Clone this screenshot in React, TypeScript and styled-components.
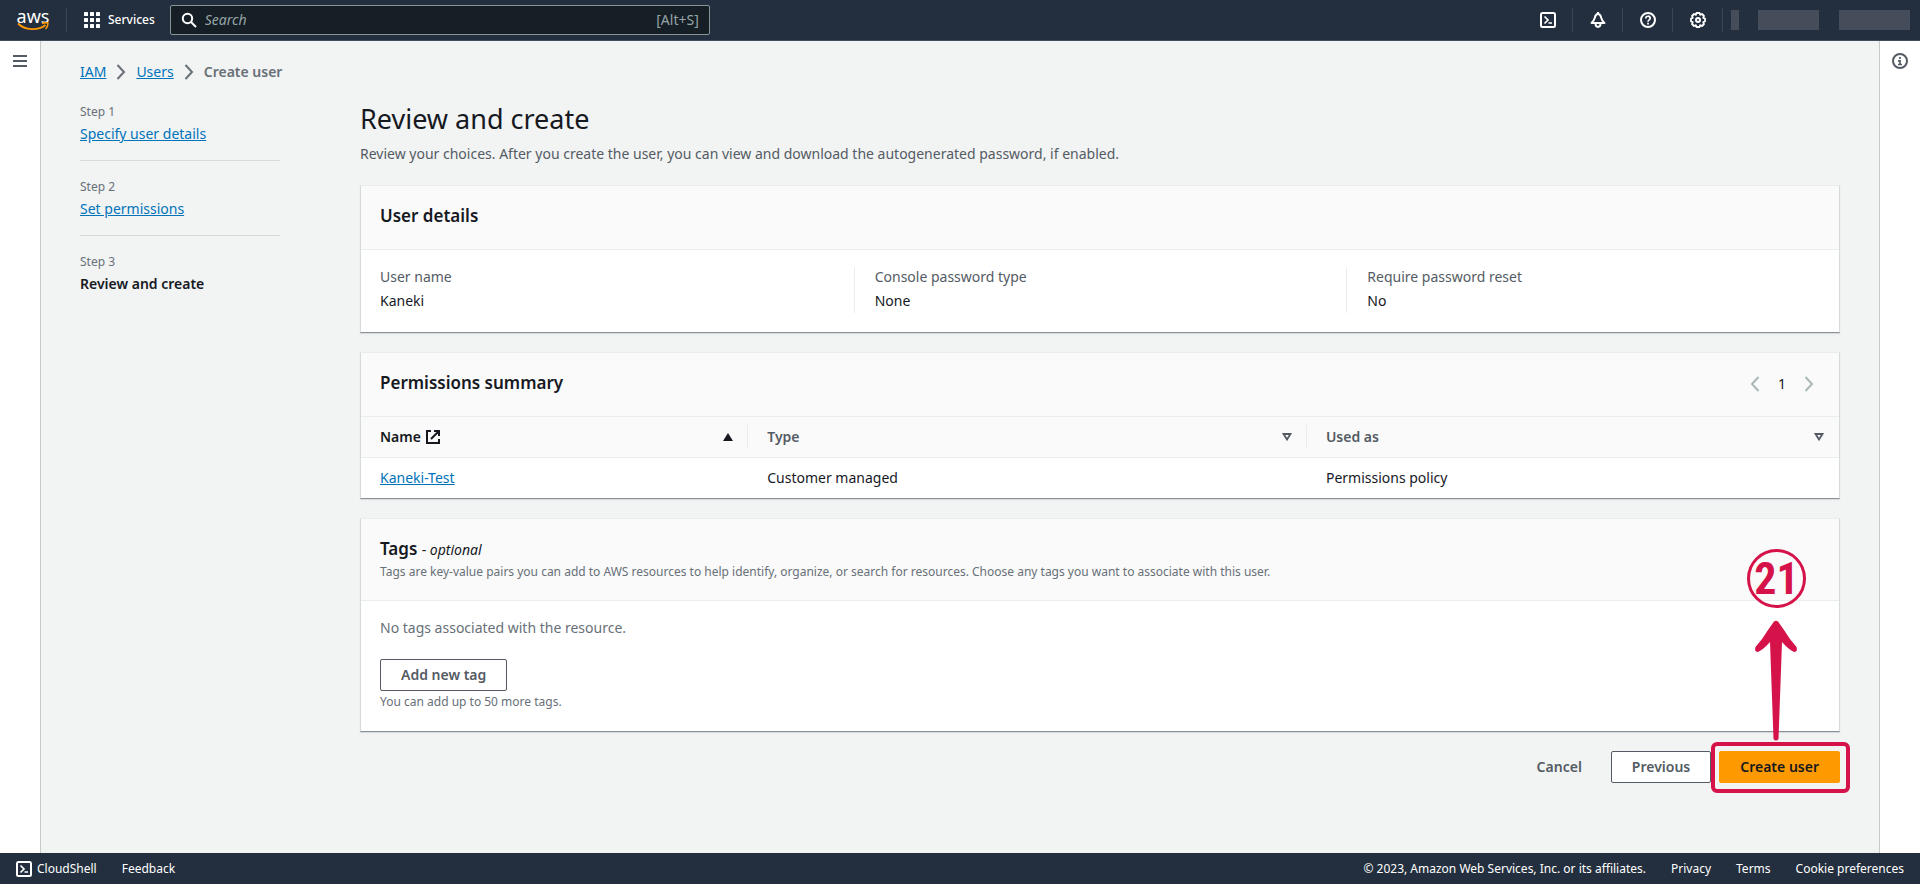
import React from "react";
import styled, { createGlobalStyle, css } from "styled-components";

const GlobalStyle = createGlobalStyle`
  *, *::before, *::after { box-sizing: border-box; }
  body {
    margin: 0;
    background: #f2f3f3;
    color: #16191f;
    font: 14px/22px "Noto Sans", "Open Sans", sans-serif;
  }
  h1, h2, p, ol, dl, dd { margin: 0; padding: 0; }
  ol { list-style: none; }
  button, input { font: inherit; }
  svg { display: block; flex: none; }
`;

const Page = styled.div`
  display: flex;
  flex-direction: column;
  min-height: 100vh;
`;

/* ---------- top bar ---------- */

const TopBar = styled.header`
  display: flex;
  align-items: center;
  height: 41px;
  flex: none;
  background: #232f3e;
  border-bottom: 1px solid #414d5c;
  color: #fff;
`;

const LogoLink = styled.a`
  display: flex;
  flex-direction: column;
  align-items: center;
  width: 66px;
  color: #fff;
  text-decoration: none;
  font-size: 18px;
  line-height: 12px;
`;

const BarRule = styled.span`
  width: 1px;
  height: 24px;
  background: #36455a;
`;

const ServicesButton = styled.button`
  display: flex;
  align-items: center;
  gap: 8px;
  padding: 0 15px 0 17px;
  border: 0;
  background: none;
  color: #fff;
  font-size: 12px;
  font-weight: 500;
`;

const SearchBox = styled.label`
  display: flex;
  align-items: center;
  gap: 8px;
  width: 540px;
  height: 30px;
  padding: 0 10px;
  border: 1px solid #879596;
  border-radius: 2px;
  background: #161e26;
  color: #95a5a6;
`;

const SearchInput = styled.input`
  flex: 1;
  min-width: 0;
  padding: 0;
  border: 0;
  outline: 0;
  background: none;
  color: #fff;
  &::placeholder { color: #95a5a6; font-style: italic; opacity: 1; }
`;

const BarTools = styled.div`
  display: flex;
  align-items: center;
  margin-left: auto;
  padding-right: 10px;
`;

const IconButton = styled.button<{ $width?: number }>`
  display: flex;
  align-items: center;
  justify-content: center;
  width: ${(p) => p.$width ?? 49}px;
  height: 24px;
  padding: 0;
  border: 0;
  background: none;
  color: inherit;
`;

const Redacted = styled.span<{ $width: number; $gap: number }>`
  width: ${(p) => p.$width}px;
  height: 20px;
  margin-left: ${(p) => p.$gap}px;
  background: #454d5b;
`;

/* ---------- frame ---------- */

const Body = styled.div`
  display: flex;
  flex: 1;
`;

const Rail = styled.aside<{ $side: "left" | "right" }>`
  flex: none;
  width: 41px;
  padding: 8px 0;
  background: #fff;
  color: #545b64;
  ${(p) => (p.$side === "left" ? css`border-right: 1px solid #c4cbcb;` : css`border-left: 1px solid #c4cbcb;`)}
`;

const Main = styled.main`
  flex: 1;
  min-width: 0;
  padding: 20px 39px 40px;
`;

const Link = styled.a`
  color: #0073bb;
  text-decoration: underline;
`;

const Breadcrumbs = styled.nav`
  display: flex;
  align-items: center;
  gap: 10px;
  color: #687078;
`;

const Current = styled.span`
  font-weight: 600;
`;

const Wizard = styled.div`
  display: flex;
  gap: 80px;
  margin-top: 17px;
`;

const Steps = styled.ol`
  flex: none;
  width: 200px;
`;

const Step = styled.li`
  padding-bottom: 15px;
  & + & { border-top: 1px solid #d5dbdb; padding-top: 14px; }
`;

const StepLabel = styled.div`
  color: #687078;
  font-size: 12px;
  line-height: 23px;
`;

const StepName = styled.div`
  font-weight: 600;
`;

const Content = styled.div`
  flex: 1;
  min-width: 0;
`;

const PageTitle = styled.h1`
  padding-top: 1px;
  font-size: 27px;
  font-weight: 400;
  line-height: 36px;
`;

const Intro = styled.p`
  margin: 6px 0 20px;
  color: #545b64;
`;

/* ---------- cards ---------- */

const Card = styled.section`
  margin-bottom: 19px;
  background: #fff;
  border: 1px solid #d5dbdb;
  border-top-color: #eaeded;
  border-bottom-color: #879196;
  box-shadow: 0 1px 1px rgba(0, 28, 36, 0.1);
`;

const CardHeader = styled.div`
  display: flex;
  align-items: flex-start;
  justify-content: space-between;
  min-height: 64px;
  padding: 19px 19px 17px;
  background: #fafafa;
  border-bottom: 1px solid #eaeded;
`;

const CardTitle = styled.h2`
  font-size: 17px;
  font-weight: 600;
  line-height: 22px;
`;

const Optional = styled.small`
  font-size: 14px;
  font-weight: 400;
`;

const Note = styled.p`
  color: #687078;
  font-size: 12px;
  line-height: 22px;
`;

const DetailGrid = styled.dl`
  display: grid;
  grid-template-columns: repeat(3, 1fr);
  padding: 17px 0 19px;
`;

const Detail = styled.div`
  height: 46px;
  padding-left: 19px;
  & + & { border-left: 1px solid #eaeded; padding-left: 20px; }
`;

const Term = styled.dt`
  margin-bottom: 3px;
  line-height: 20px;
  color: #545b64;
`;

const Pager = styled.div`
  display: flex;
  align-items: center;
  gap: 8px;
  padding-right: 6px;
  color: #aab7b8;
`;

const PageNumber = styled.button`
  padding: 0 10px;
  border: 0;
  background: none;
  color: #16191f;
`;

const Table = styled.table`
  width: 100%;
  border-collapse: collapse;
  table-layout: fixed;
`;

const HeadCell = styled.th<{ $width?: string; $sorted?: boolean }>`
  width: ${(p) => p.$width ?? "auto"};
  height: 40px;
  padding: 8px 0 7px;
  background: #fafafa;
  border-bottom: 1px solid #eaeded;
  color: ${(p) => (p.$sorted ? "#16191f" : "#545b64")};
  font-weight: 600;
  text-align: left;
`;

const HeadInner = styled.div<{ $rule?: boolean }>`
  display: flex;
  align-items: center;
  justify-content: space-between;
  height: 24px;
  padding: 0 14px 0 19px;
  border-right: 1px solid ${(p) => (p.$rule ? "#eaeded" : "transparent")};
`;

const HeadLabel = styled.span`
  display: flex;
  align-items: center;
  gap: 5px;
`;

const Cell = styled.td`
  height: 41px;
  padding: 0 19px;
`;

const TagBody = styled.div`
  display: flex;
  flex-direction: column;
  align-items: flex-start;
  padding: 16px 19px 18px;
  color: #687078;
`;

const Button = styled.button<{ $kind?: "normal" | "primary" | "link" }>`
  height: 32px;
  padding: 0 20px;
  border: 1px solid #545b64;
  border-radius: 2px;
  background: #fff;
  color: #545b64;
  font-weight: 600;
  line-height: 20px;
  ${(p) => p.$kind === "primary" && css`background: #ff9900; border-color: #ff9900; color: #16191f;`}
  ${(p) => p.$kind === "link" && css`background: none; border-color: transparent;`}
`;

const AddTag = styled(Button)`
  margin-top: 20px;
`;

const Actions = styled.div`
  display: flex;
  justify-content: flex-end;
  gap: 8px;
`;

/* ---------- callout drawn over the page ---------- */

const Marked = styled.div`
  position: relative;
`;

const Frame = styled.span`
  position: absolute;
  inset: -9px -10px -10px -8px;
  border: 4px solid #d5134a;
  border-radius: 6px;
  pointer-events: none;
`;

const Arrow = styled.svg`
  position: absolute;
  bottom: 42px;
  right: 42px;
  pointer-events: none;
`;

const Badge = styled.span`
  position: absolute;
  bottom: 175px;
  right: 34px;
  display: flex;
  align-items: center;
  justify-content: center;
  width: 59px;
  height: 59px;
  border: 3px solid #d5134a;
  border-radius: 50%;
  color: #d5134a;
  font: 700 44px/50px "Liberation Sans Narrow", "Roboto Condensed", "Liberation Sans", sans-serif;
`;

/* ---------- footer ---------- */

const Footer = styled.footer`
  display: flex;
  align-items: center;
  justify-content: space-between;
  height: 31px;
  flex: none;
  padding: 0 16px;
  background: #232f3e;
  color: #fff;
  font-size: 12px;
`;

const FooterGroup = styled.div`
  display: flex;
  align-items: center;
  gap: 25px;
`;

const FooterLink = styled.a`
  display: flex;
  align-items: center;
  gap: 5px;
  color: #fff;
  text-decoration: none;
`;

/* ---------- icons ---------- */

const stroke = { fill: "none", stroke: "currentColor", strokeWidth: 2 } as const;

const Smile = () => (
  <svg width="32" height="9" viewBox="0 0 32 9">
    <path d="M1 1.500C8 8.500 21 9 28.500 3" fill="none" stroke="#f90" strokeWidth="1.800" />
    <path d="M25 1.500C28 .5 30 .5 31 1.200C31 3 30.500 5 28.500 7" fill="none" stroke="#f90" strokeWidth="1.500" />
  </svg>
);

const GridIcon = () => (
  <svg width="16" height="16" viewBox="0 0 16 16" fill="currentColor">
    {[0, 6, 12].flatMap((y) => [0, 6, 12].map((x) => <rect key={`${x}-${y}`} x={x} y={y} width="4" height="4" rx="0.6" />))}
  </svg>
);

const SearchIcon = () => (
  <svg width="16" height="16" viewBox="0 0 16 16" {...stroke} color="#fff">
    <circle cx="6.500" cy="6.500" r="4.700" />
    <path d="M10 10l5 5" />
  </svg>
);

const ShellIcon = () => (
  <svg width="16" height="16" viewBox="0 0 16 16" {...stroke}>
    <rect x="1" y="1" width="14" height="14" rx="1.500" />
    <path d="M4.500 4.500L8 8l-3.500 3.500M8.500 11H12" strokeWidth="1.700" />
  </svg>
);

const BellIcon = () => (
  <svg width="16" height="16" viewBox="0 0 16 16" {...stroke} strokeLinejoin="round">
    <path d="M8 0v2M1.500 11h13C12.500 9.500 11.800 8 11.300 6C10.800 3.500 9.800 2 8 2S5.200 3.500 4.700 6C4.200 8 3.500 9.500 1.500 11zM5.500 11.500C5.500 16 10.500 16 10.500 11.500" />
  </svg>
);

const HelpIcon = () => (
  <svg width="16" height="16" viewBox="0 0 16 16" {...stroke}>
    <circle cx="8" cy="8" r="7" />
    <path d="M5.800 6.500C5.800 3.500 10.300 3.500 10.200 6.300C10.200 8 8 7.800 8 9.800M8 10.700v1.800" strokeWidth="1.700" />
  </svg>
);

const GearIcon = () => (
  <svg width="16" height="16" viewBox="0 0 16 16" {...stroke} strokeLinejoin="round">
    <path d="M6.500 1h3l.6 1.800 1.900-.8 2 2-.8 1.900 1.800.6v3l-1.800.6.8 1.900-2 2-1.900-.8L9.500 15h-3l-.6-1.800-1.900.8-2-2 .8-1.900L1 9.500v-3l1.800-.6L2 4l2-2 1.900.8z" strokeWidth="1.800" />
    <circle cx="8" cy="8" r="2" />
  </svg>
);

const MenuIcon = () => (
  <svg width="14" height="12" viewBox="0 0 14 12" {...stroke}>
    <path d="M0 1h14M0 6h14M0 11h14" />
  </svg>
);

const InfoIcon = () => (
  <svg width="16" height="16" viewBox="0 0 16 16" {...stroke}>
    <circle cx="8" cy="8" r="7" />
    <path d="M8 4v2M6 7.800h2V12M6 11.500h4" strokeWidth="1.700" />
  </svg>
);

const Chevron = ({ left = false }: { left?: boolean }) => (
  <svg width="10" height="16" viewBox="0 0 10 16" {...stroke}>
    <path d={left ? "M8.500 1L2 8l6.500 7" : "M1.500 1L8 8l-6.500 7"} />
  </svg>
);

const ExternalIcon = () => (
  <svg width="14" height="14" viewBox="0 0 14 14" {...stroke}>
    <path d="M5 1H1v12h12V9M8 1h5v5M13 1L5 9" />
  </svg>
);

const SortIcon = ({ up = false }: { up?: boolean }) => (
  <svg width="10" height="8" viewBox="0 0 10 8">
    {up ? (
      <path d="M5 0l5 8H0z" fill="#16191f" />
    ) : (
      <path d="M1.500 1h7L5 6.500z" fill="none" stroke="#545b64" strokeWidth="1.800" />
    )}
  </svg>
);

const details = [
  ["User name", "Kaneki"],
  ["Console password type", "None"],
  ["Require password reset", "No"],
];

const tools = [
  { label: "CloudShell", icon: <ShellIcon /> },
  { label: "Notifications", icon: <BellIcon /> },
  { label: "Help", icon: <HelpIcon /> },
  { label: "Settings", icon: <GearIcon /> },
];

export default function App() {
  return (
    <Page>
      <GlobalStyle />
      <TopBar>
        <LogoLink href="#">
          aws
          <Smile />
        </LogoLink>
        <BarRule />
        <ServicesButton>
          <GridIcon />
          Services
        </ServicesButton>
        <SearchBox>
          <SearchIcon />
          <SearchInput type="search" placeholder="Search" aria-label="Search" />
          [Alt+S]
        </SearchBox>
        <BarTools>
          {tools.map((tool) => (
            <React.Fragment key={tool.label}>
              <IconButton aria-label={tool.label}>{tool.icon}</IconButton>
              <BarRule />
            </React.Fragment>
          ))}
          <Redacted $width={8} $gap={8} />
          <Redacted $width={61} $gap={19} />
          <Redacted $width={71} $gap={20} />
        </BarTools>
      </TopBar>

      <Body>
        <Rail $side="left">
          <IconButton $width={40} aria-label="Open navigation">
            <MenuIcon />
          </IconButton>
        </Rail>
        <Main>
          <Breadcrumbs aria-label="Breadcrumbs">
            <Link href="#">IAM</Link>
            <Chevron />
            <Link href="#">Users</Link>
            <Chevron />
            <Current>Create user</Current>
          </Breadcrumbs>

          <Wizard>
            <Steps>
              <Step>
                <StepLabel>Step 1</StepLabel>
                <Link href="#">Specify user details</Link>
              </Step>
              <Step>
                <StepLabel>Step 2</StepLabel>
                <Link href="#">Set permissions</Link>
              </Step>
              <Step>
                <StepLabel>Step 3</StepLabel>
                <StepName>Review and create</StepName>
              </Step>
            </Steps>

            <Content>
              <PageTitle>Review and create</PageTitle>
              <Intro>
                Review your choices. After you create the user, you can view and download the autogenerated password, if
                enabled.
              </Intro>

              <Card>
                <CardHeader>
                  <CardTitle>User details</CardTitle>
                </CardHeader>
                <DetailGrid>
                  {details.map(([term, value]) => (
                    <Detail key={term}>
                      <Term>{term}</Term>
                      <dd>{value}</dd>
                    </Detail>
                  ))}
                </DetailGrid>
              </Card>

              <Card>
                <CardHeader>
                  <CardTitle>Permissions summary</CardTitle>
                  <Pager>
                    <IconButton $width={10} aria-label="Previous page" disabled>
                      <Chevron left />
                    </IconButton>
                    <PageNumber>1</PageNumber>
                    <IconButton $width={10} aria-label="Next page" disabled>
                      <Chevron />
                    </IconButton>
                  </Pager>
                </CardHeader>
                <Table>
                  <thead>
                    <tr>
                      <HeadCell $width="26.2%" $sorted>
                        <HeadInner $rule>
                          <HeadLabel>
                            Name <ExternalIcon />
                          </HeadLabel>
                          <SortIcon up />
                        </HeadInner>
                      </HeadCell>
                      <HeadCell $width="37.8%">
                        <HeadInner $rule>
                          Type <SortIcon />
                        </HeadInner>
                      </HeadCell>
                      <HeadCell>
                        <HeadInner>
                          Used as <SortIcon />
                        </HeadInner>
                      </HeadCell>
                    </tr>
                  </thead>
                  <tbody>
                    <tr>
                      <Cell>
                        <Link href="#">Kaneki-Test</Link>
                      </Cell>
                      <Cell>Customer managed</Cell>
                      <Cell>Permissions policy</Cell>
                    </tr>
                  </tbody>
                </Table>
              </Card>

              <Card>
                <CardHeader>
                  <div>
                    <CardTitle>
                      Tags{" "}
                      <Optional>
                        - <em>optional</em>
                      </Optional>
                    </CardTitle>
                    <Note>
                      Tags are key-value pairs you can add to AWS resources to help identify, organize, or search for
                      resources. Choose any tags you want to associate with this user.
                    </Note>
                  </div>
                </CardHeader>
                <TagBody>
                  <p>No tags associated with the resource.</p>
                  <AddTag>Add new tag</AddTag>
                  <Note>You can add up to 50 more tags.</Note>
                </TagBody>
              </Card>

              <Actions>
                <Button $kind="link">Cancel</Button>
                <Button>Previous</Button>
                <Marked>
                  <Button $kind="primary">Create user</Button>
                  <Frame />
                  <Arrow width="44" height="121" viewBox="0 0 44 121" fill="#d5134a">
                    <path d="M20 1.500Q22 0 24 1.500L30 10Q36 20 42.500 27Q44 32 40 32Q34 29 28 22L24.500 119Q22 122 19.500 119L16 22Q10 29 4 32Q0 32 1.500 27Q8 20 14 10Z" />
                  </Arrow>
                  <Badge>21</Badge>
                </Marked>
              </Actions>
            </Content>
          </Wizard>
        </Main>
        <Rail $side="right">
          <IconButton $width={40} aria-label="Open help panel">
            <InfoIcon />
          </IconButton>
        </Rail>
      </Body>

      <Footer>
        <FooterGroup>
          <FooterLink href="#">
            <ShellIcon />
            CloudShell
          </FooterLink>
          <FooterLink href="#">Feedback</FooterLink>
        </FooterGroup>
        <FooterGroup>
          <span>© 2023, Amazon Web Services, Inc. or its affiliates.</span>
          <FooterLink href="#">Privacy</FooterLink>
          <FooterLink href="#">Terms</FooterLink>
          <FooterLink href="#">Cookie preferences</FooterLink>
        </FooterGroup>
      </Footer>
    </Page>
  );
}
